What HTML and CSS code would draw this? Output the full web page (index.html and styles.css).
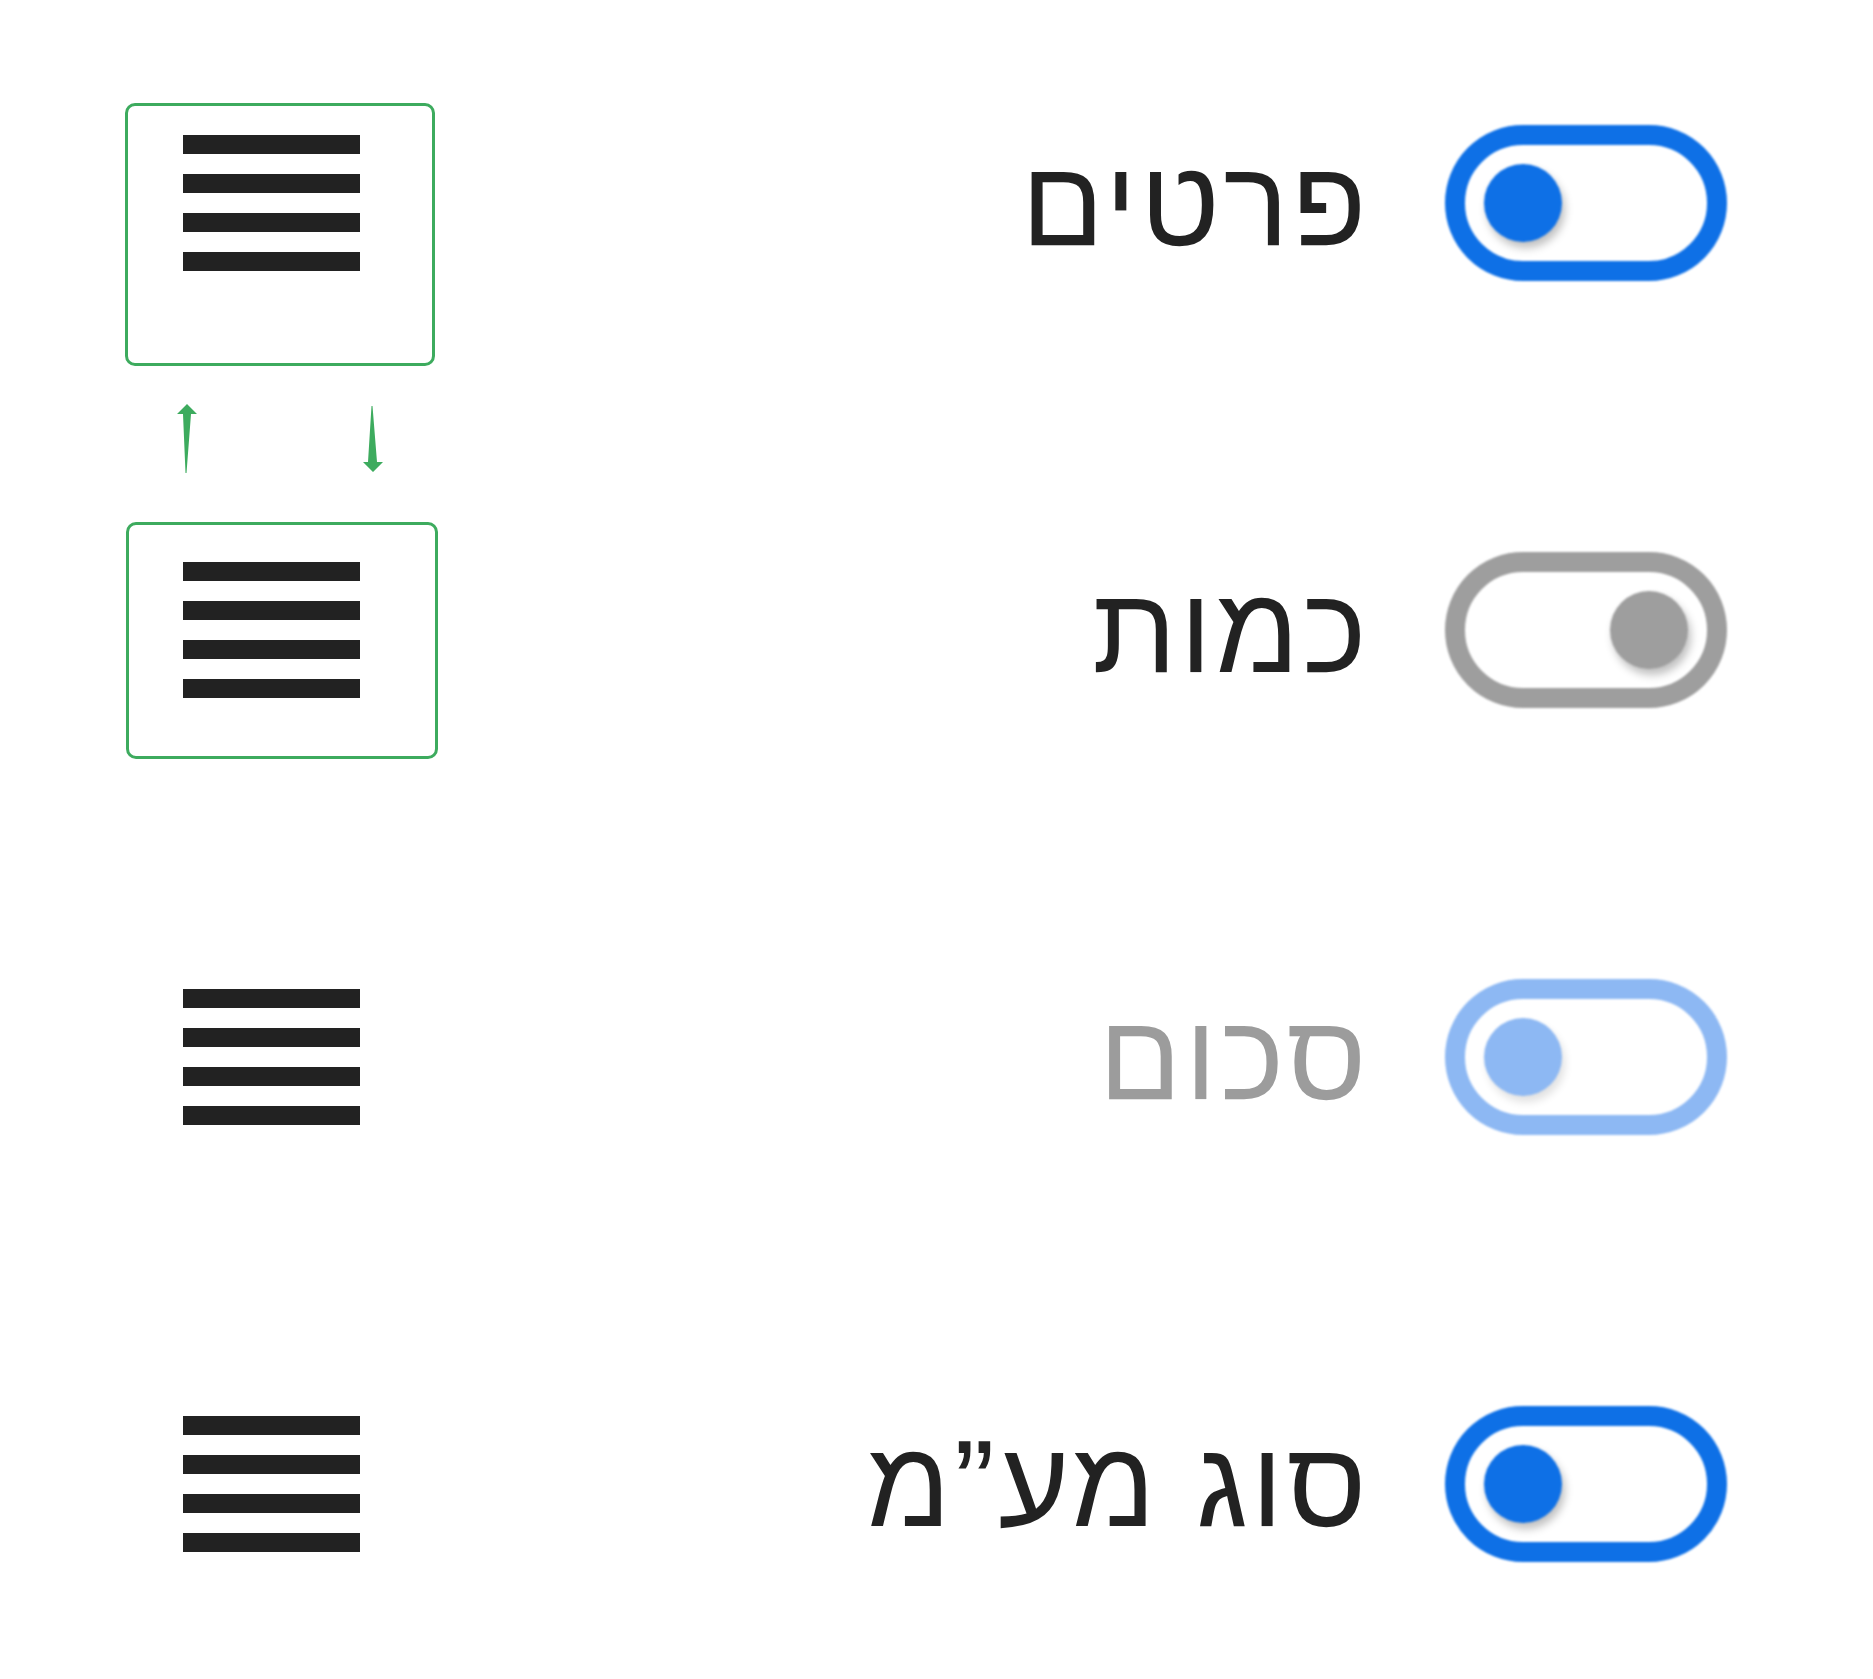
FILE: index.html
```html
<!DOCTYPE html>
<html lang="he" dir="rtl">
<head>
    <meta charset="UTF-8">
    <meta name="viewport" content="width=device-width, initial-scale=1.0">
    <title>עמודות</title>
    <link rel="stylesheet" href="styles.css">
</head>
<body>
    <ul class="fields">
        <li class="field">
            <span class="switch on"><span class="knob"></span></span>
            <span class="label">פרטים</span>
            <span class="handle">
                <span class="drop drop-top"></span>
                <i></i><i></i><i></i><i></i>
            </span>
        </li>
        <li class="field">
            <span class="switch off"><span class="knob"></span></span>
            <span class="label">כמות</span>
            <span class="handle">
                <span class="drop drop-bottom"></span>
                <i></i><i></i><i></i><i></i>
            </span>
        </li>
        <li class="field disabled">
            <span class="switch on"><span class="knob"></span></span>
            <span class="label">סכום</span>
            <span class="handle"><i></i><i></i><i></i><i></i></span>
        </li>
        <li class="field">
            <span class="switch on"><span class="knob"></span></span>
            <span class="label">סוג מע”מ</span>
            <span class="handle"><i></i><i></i><i></i><i></i></span>
        </li>

        <!-- swap arrows between the two dragged rows -->
        <svg class="swap" width="220" height="80" viewBox="0 0 220 80">
            <polygon points="17,4 27,14 21,14 16.5,73 15.5,73 13,14 7,14" fill="#3dab5e"/>
            <polygon points="201.5,6 202.5,6 207,62 213,62 203,72 193,62 198,62" fill="#3dab5e"/>
        </svg>
    </ul>
</body>
</html>
```

FILE: styles.css
```css
body {
    margin: 0;
    background: #fff;
    font-family: "Liberation Sans", "DejaVu Sans", sans-serif;
    color: #222;
}
.fields {
    position: relative;
    list-style: none;
    margin: 0;
    padding: 123px 146px 0 183px;
    display: flex;
    flex-direction: column;
    gap: 267px;
}
.field {
    display: flex;
    align-items: center;
    height: 160px;
    gap: 75px;
}
.label {
    font-size: 122px;
    line-height: 1;
    letter-spacing: 3.5px;
    white-space: nowrap;
    filter: blur(0.5px);
}
.handle {
    position: relative;
    margin-inline-start: auto;
    width: 177px;
    display: flex;
    flex-direction: column;
    gap: 20px;
}
.handle i {
    display: block;
    height: 19px;
    background: #222;
    filter: blur(0.7px);
}
.drop {
    position: absolute;
    border: 3.5px solid #3dab5e;
    border-radius: 10px;
    filter: blur(0.3px);
}
.drop-top {
    left: -58px;
    top: -32px;
    width: 304px;
    height: 257px;
}
.drop-bottom {
    left: -57px;
    top: -40px;
    width: 306px;
    height: 231px;
}
.swap {
    position: absolute;
    left: 170px;
    top: 400px;
}
.switch {
    direction: ltr;
    flex: none;
    box-sizing: border-box;
    width: 282px;
    height: 156px;
    border: 20px solid #0e70e6;
    border-radius: 78px;
    padding: 0 19px;
    display: flex;
    align-items: center;
    filter: blur(0.8px);
}
.knob {
    width: 78px;
    height: 78px;
    border-radius: 50%;
    background: #0e70e6;
    box-shadow: 3px 6px 8px rgba(0, 0, 0, 0.25);
}
.switch.off {
    border-color: #9e9e9e;
    justify-content: flex-end;
}
.switch.off .knob {
    background: #9e9e9e;
}
.disabled .switch {
    border-color: #8db8f3;
}
.disabled .knob {
    background: #8db8f3;
    box-shadow: 3px 6px 8px rgba(0, 0, 0, 0.12);
}
.disabled .label {
    color: #9c9c9c;
}
```
